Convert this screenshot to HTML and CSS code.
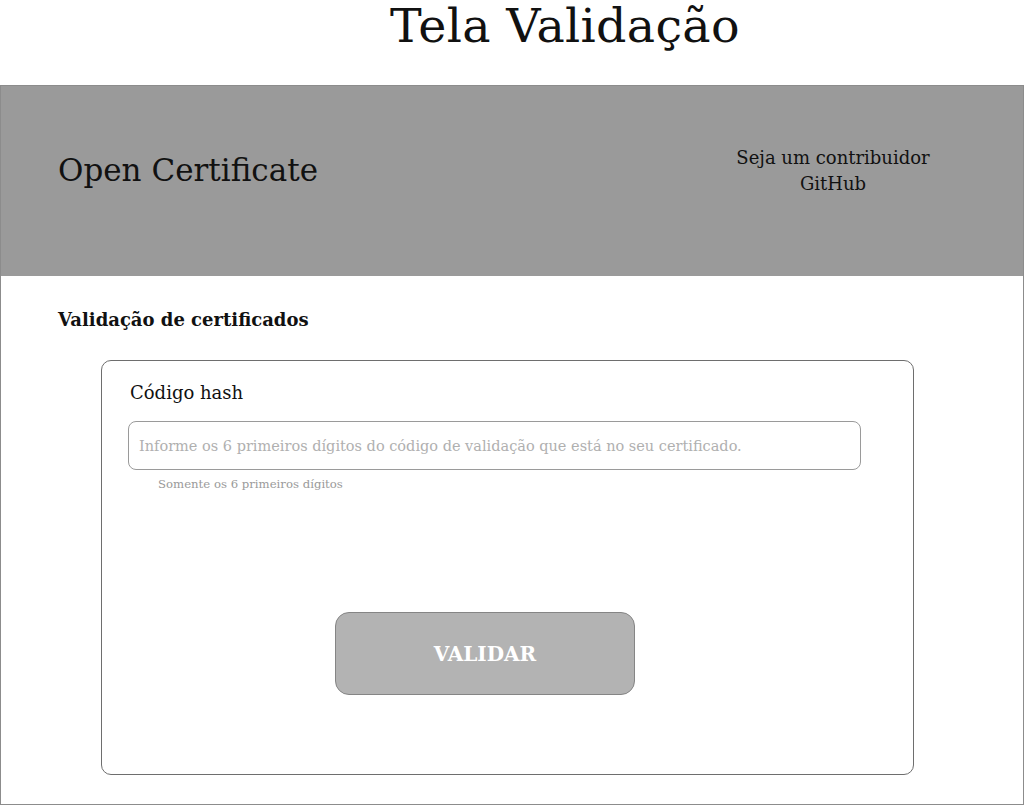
FILE: index.html
```html
<!DOCTYPE html>
<html lang="pt-BR">
<head>
<meta charset="utf-8">
<title>Tela Validação</title>
<link rel="stylesheet" href="styles.css">
</head>
<body>
<h1 class="page-title">Tela Validação</h1>
<div class="frame">
  <header class="topbar">
    <div class="brand">Open Certificate</div>
    <div class="contrib">Seja um contribuidor<br>GitHub</div>
  </header>
  <main class="content">
    <h2 class="section-title">Validação de certificados</h2>
    <div class="card">
      <label class="field-label" for="hash">Código hash</label>
      <input id="hash" class="field-input" type="text" placeholder="Informe os 6 primeiros dígitos do código de validação que está no seu certificado.">
      <div class="field-help">Somente os 6 primeiros dígitos</div>
      <div class="actions">
        <button class="btn" type="button">VALIDAR</button>
      </div>
    </div>
  </main>
</div>
</body>
</html>
```
FILE: styles.css
```css
* { box-sizing: border-box; }
html, body { margin: 0; padding: 0; background: #fff; }
body {
  font-family: "DejaVu Serif", "Liberation Serif", serif;
  color: #111;
  width: 1024px;
  height: 805px;
  overflow: hidden;
}
.page-title {
  margin: 0;
  height: 85px;
  padding-top: 0;
  padding-left: 390px;
  font-weight: normal;
  font-size: 47.5px;
  line-height: 51px;
  letter-spacing: 0.3px;
}
.frame {
  border: 1px solid #8c8c8c;
  width: 1024px;
  height: 720px;
}
.topbar {
  background: #9a9a9a;
  height: 190px;
  display: flex;
  align-items: center;
  padding-left: 57px;
  padding-bottom: 22px;
}
.brand {
  font-size: 31px;
  flex: 1;
  color: #111;
}
.contrib {
  width: 200px;
  margin-right: 90px;
  text-align: center;
  font-size: 18px;
  line-height: 26px;
  padding-bottom: 0;
  margin-top: 2px;
}
.content {
  padding: 32px 0 0 57px;
}
.section-title {
  margin: 0;
  font-size: 18px;
  font-weight: bold;
  line-height: 24px;
}
.card {
  margin: 28px 0 0 43px;
  width: 813px;
  height: 415px;
  border: 1px solid #6e6e6e;
  border-radius: 10px;
  padding: 20px 52px 0 26px;
  display: flex;
  flex-direction: column;
}
.field-label {
  font-size: 18px;
  line-height: 24px;
  margin-left: 2px;
}
.field-input {
  margin-top: 16px;
  width: 733px;
  height: 49px;
  border: 1px solid #9a9a9a;
  border-radius: 8px;
  padding: 0 10px;
  font-family: inherit;
  font-size: 14.5px;
  color: #333;
  outline: none;
}
.field-input::placeholder { color: #b0b0b0; }
.field-help {
  margin: 5px 0 0 30px;
  font-size: 11.7px;
  line-height: 18px;
  color: #9a9a9a;
}
.actions {
  margin-top: 119px;
  padding-left: 207px;
}
.btn {
  width: 300px;
  height: 83px;
  background: #b3b3b3;
  border: 1px solid #858585;
  border-radius: 14px;
  color: #fff;
  font-family: inherit;
  font-size: 20px;
  font-weight: bold;
}
```
